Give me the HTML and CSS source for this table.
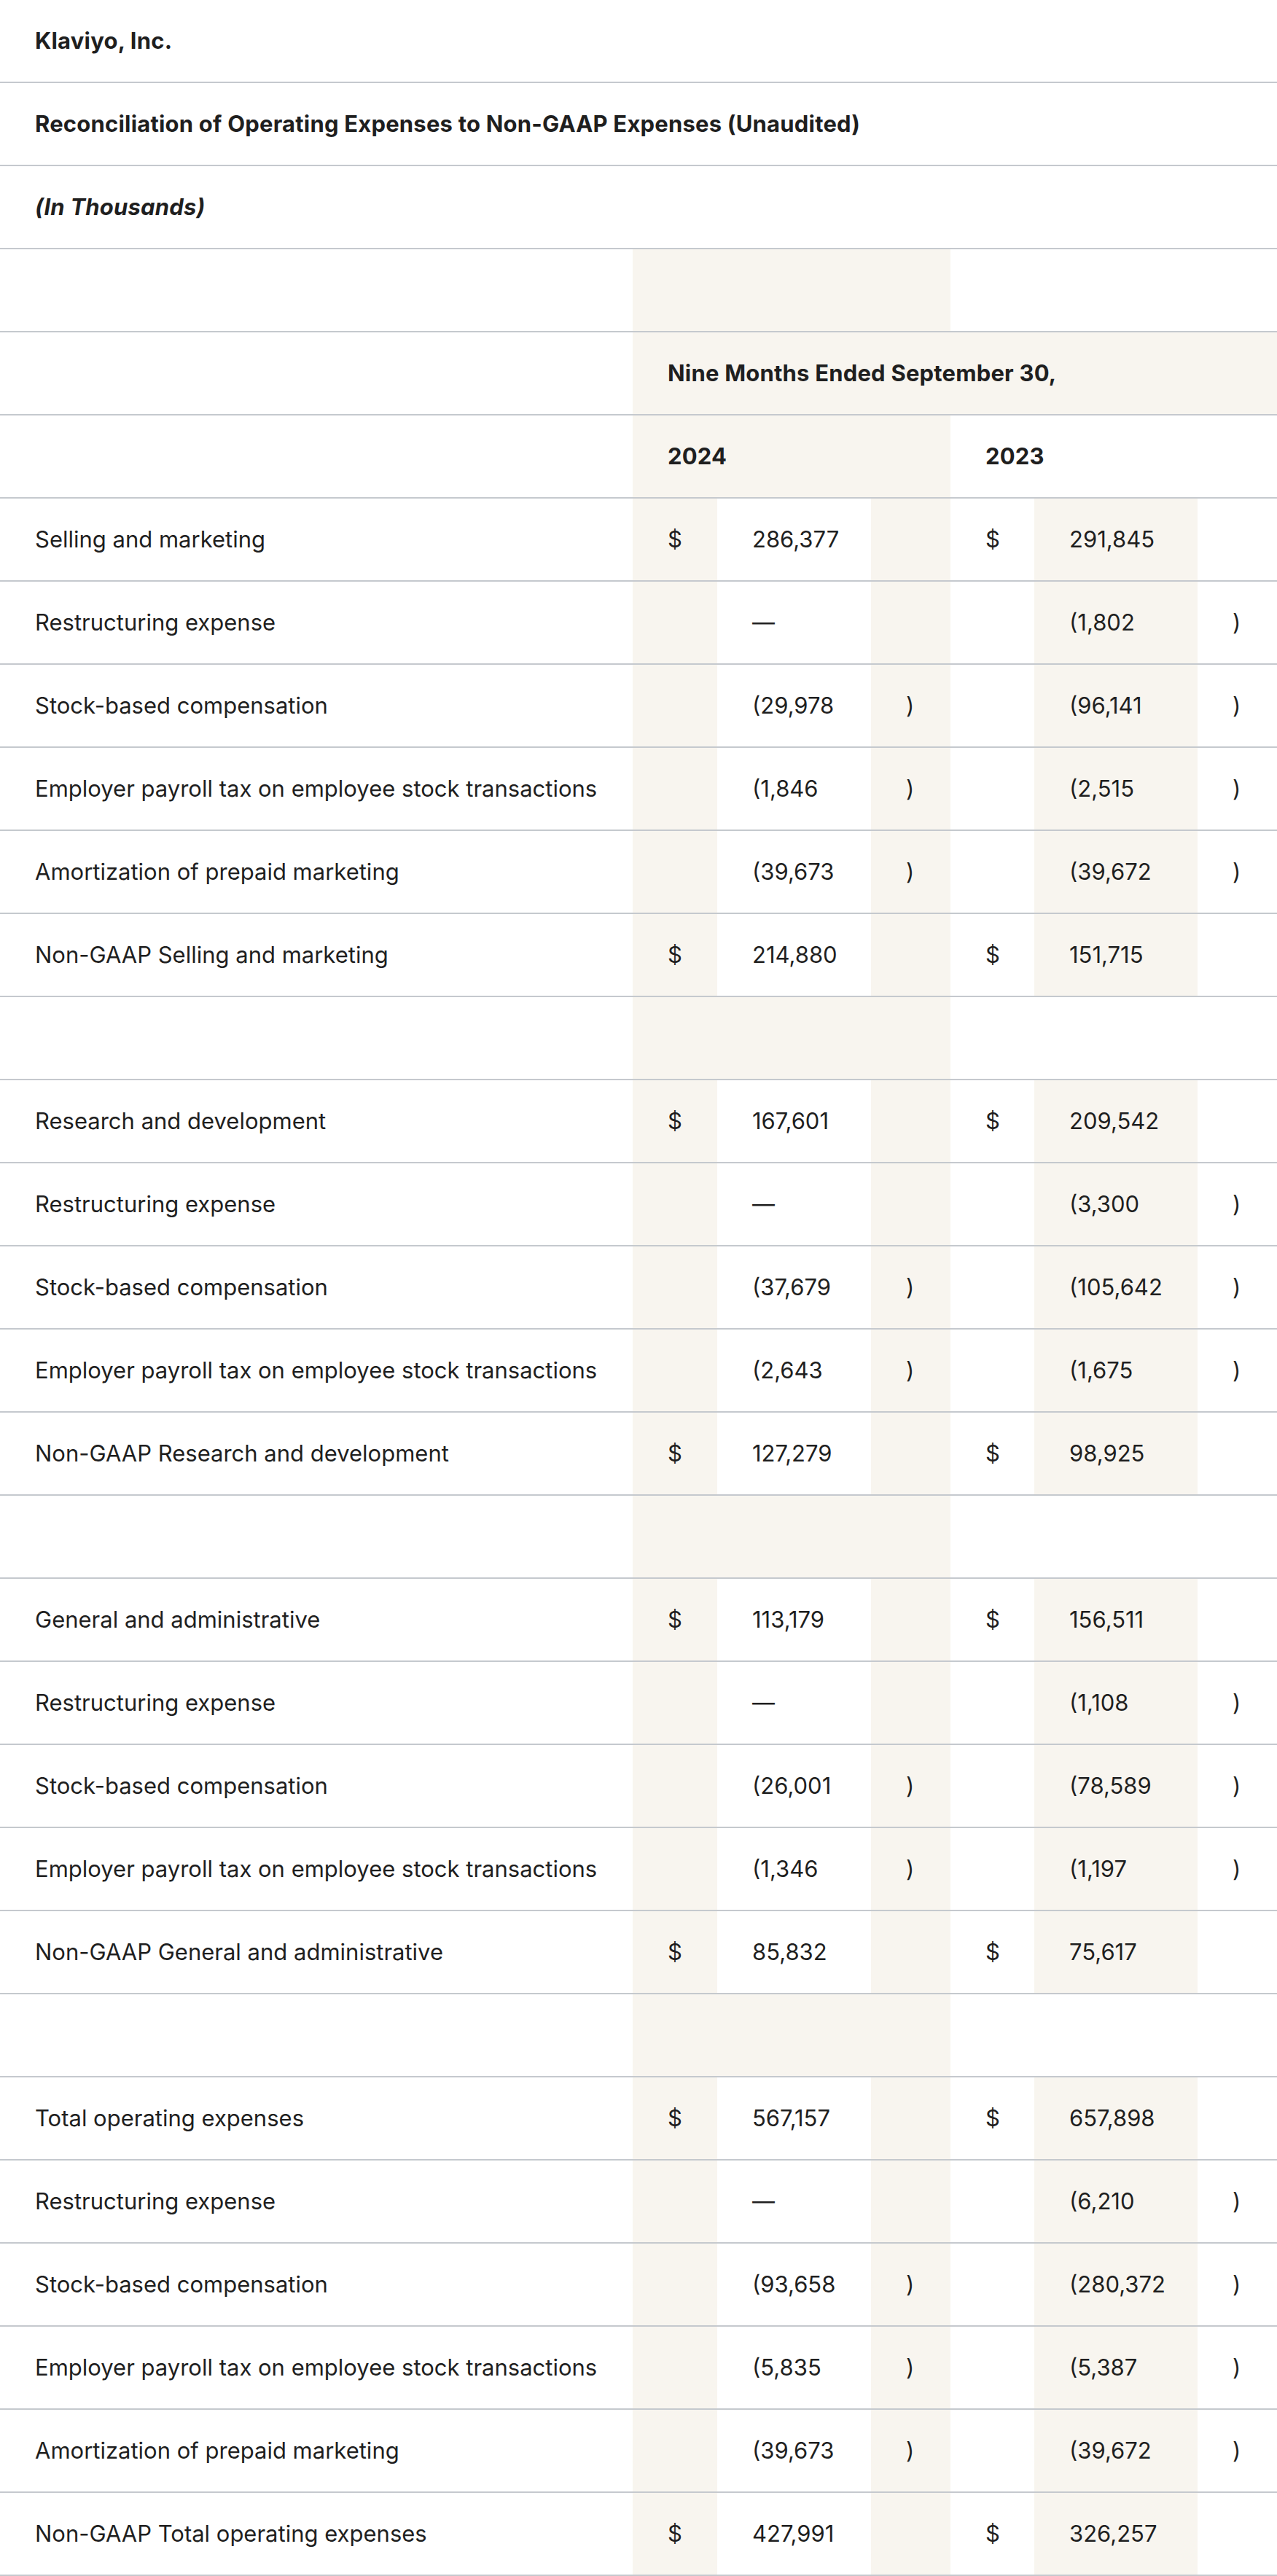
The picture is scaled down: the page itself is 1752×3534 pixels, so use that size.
FILE: index.html
```html
<!DOCTYPE html>
<html lang="en">
<head>
<meta charset="utf-8">
<title>Klaviyo, Inc. — Reconciliation of Operating Expenses to Non-GAAP Expenses</title>
<link rel="stylesheet" href="styles.css">
</head>
<body>
<table class="fin">
  <colgroup>
    <col class="c-label">
    <col class="c-cur">
    <col class="c-val24">
    <col class="c-par">
    <col class="c-cur23">
    <col class="c-val23">
    <col class="c-par">
  </colgroup>
  <tbody>
    <tr><td class="hd" colspan="7">Klaviyo, Inc.</td></tr>
    <tr><td class="hd" colspan="7">Reconciliation of Operating Expenses to Non-GAAP Expenses (Unaudited)</td></tr>
    <tr><td class="hd it" colspan="7">(In Thousands)</td></tr>
    <tr class="gap"><td></td><td class="sh" colspan="3"></td><td colspan="3"></td></tr>
    <tr><td></td><td class="sh hd" colspan="6">Nine Months Ended September 30,</td></tr>
    <tr><td></td><td class="sh hd" colspan="3">2024</td><td class="hd" colspan="3">2023</td></tr>

    <tr><td>Selling and marketing</td><td class="sh">$</td><td>286,377</td><td class="sh"></td><td>$</td><td class="sh">291,845</td><td></td></tr>
    <tr><td>Restructuring expense</td><td class="sh"></td><td>—</td><td class="sh"></td><td></td><td class="sh">(1,802</td><td>)</td></tr>
    <tr><td>Stock-based compensation</td><td class="sh"></td><td>(29,978</td><td class="sh">)</td><td></td><td class="sh">(96,141</td><td>)</td></tr>
    <tr><td>Employer payroll tax on employee stock transactions</td><td class="sh"></td><td>(1,846</td><td class="sh">)</td><td></td><td class="sh">(2,515</td><td>)</td></tr>
    <tr><td>Amortization of prepaid marketing</td><td class="sh"></td><td>(39,673</td><td class="sh">)</td><td></td><td class="sh">(39,672</td><td>)</td></tr>
    <tr><td>Non-GAAP Selling and marketing</td><td class="sh">$</td><td>214,880</td><td class="sh"></td><td>$</td><td class="sh">151,715</td><td></td></tr>
    <tr class="gap"><td></td><td class="sh" colspan="3"></td><td colspan="3"></td></tr>

    <tr><td>Research and development</td><td class="sh">$</td><td>167,601</td><td class="sh"></td><td>$</td><td class="sh">209,542</td><td></td></tr>
    <tr><td>Restructuring expense</td><td class="sh"></td><td>—</td><td class="sh"></td><td></td><td class="sh">(3,300</td><td>)</td></tr>
    <tr><td>Stock-based compensation</td><td class="sh"></td><td>(37,679</td><td class="sh">)</td><td></td><td class="sh">(105,642</td><td>)</td></tr>
    <tr><td>Employer payroll tax on employee stock transactions</td><td class="sh"></td><td>(2,643</td><td class="sh">)</td><td></td><td class="sh">(1,675</td><td>)</td></tr>
    <tr><td>Non-GAAP Research and development</td><td class="sh">$</td><td>127,279</td><td class="sh"></td><td>$</td><td class="sh">98,925</td><td></td></tr>
    <tr class="gap"><td></td><td class="sh" colspan="3"></td><td colspan="3"></td></tr>

    <tr><td>General and administrative</td><td class="sh">$</td><td>113,179</td><td class="sh"></td><td>$</td><td class="sh">156,511</td><td></td></tr>
    <tr><td>Restructuring expense</td><td class="sh"></td><td>—</td><td class="sh"></td><td></td><td class="sh">(1,108</td><td>)</td></tr>
    <tr><td>Stock-based compensation</td><td class="sh"></td><td>(26,001</td><td class="sh">)</td><td></td><td class="sh">(78,589</td><td>)</td></tr>
    <tr><td>Employer payroll tax on employee stock transactions</td><td class="sh"></td><td>(1,346</td><td class="sh">)</td><td></td><td class="sh">(1,197</td><td>)</td></tr>
    <tr><td>Non-GAAP General and administrative</td><td class="sh">$</td><td>85,832</td><td class="sh"></td><td>$</td><td class="sh">75,617</td><td></td></tr>
    <tr class="gap"><td></td><td class="sh" colspan="3"></td><td colspan="3"></td></tr>

    <tr><td>Total operating expenses</td><td class="sh">$</td><td>567,157</td><td class="sh"></td><td>$</td><td class="sh">657,898</td><td></td></tr>
    <tr><td>Restructuring expense</td><td class="sh"></td><td>—</td><td class="sh"></td><td></td><td class="sh">(6,210</td><td>)</td></tr>
    <tr><td>Stock-based compensation</td><td class="sh"></td><td>(93,658</td><td class="sh">)</td><td></td><td class="sh">(280,372</td><td>)</td></tr>
    <tr><td>Employer payroll tax on employee stock transactions</td><td class="sh"></td><td>(5,835</td><td class="sh">)</td><td></td><td class="sh">(5,387</td><td>)</td></tr>
    <tr><td>Amortization of prepaid marketing</td><td class="sh"></td><td>(39,673</td><td class="sh">)</td><td></td><td class="sh">(39,672</td><td>)</td></tr>
    <tr><td>Non-GAAP Total operating expenses</td><td class="sh">$</td><td>427,991</td><td class="sh"></td><td>$</td><td class="sh">326,257</td><td></td></tr>
  </tbody>
</table>
</body>
</html>
```

FILE: styles.css
```css
html, body {
  margin: 0;
  padding: 0;
  background: #ffffff;
}

body {
  font-family: Inter, "Noto Sans", "Liberation Sans", sans-serif;
  color: #1f1f1f;
}

.fin {
  width: 1752px;
  table-layout: fixed;
  border-collapse: separate;
  border-spacing: 0;
}

.c-label { width: 868px; }
.c-cur { width: 116px; }
.c-val24 { width: 211px; }
.c-par { width: 109px; }
.c-cur23 { width: 115px; }
.c-val23 { width: 224px; }

.fin td {
  box-sizing: border-box;
  height: 114px;
  padding: 0 0 0 48px;
  border-bottom: 2px solid #c5c9ce;
  font-size: 31px;
  font-weight: 400;
  line-height: 36px;
  letter-spacing: 0;
  vertical-align: middle;
  text-align: left;
  white-space: nowrap;
}

.fin td.sh {
  background: #f8f5ef;
}

.fin td.hd {
  font-weight: 700;
  letter-spacing: 0.2px;
}

.fin td.it {
  font-style: italic;
}
```
